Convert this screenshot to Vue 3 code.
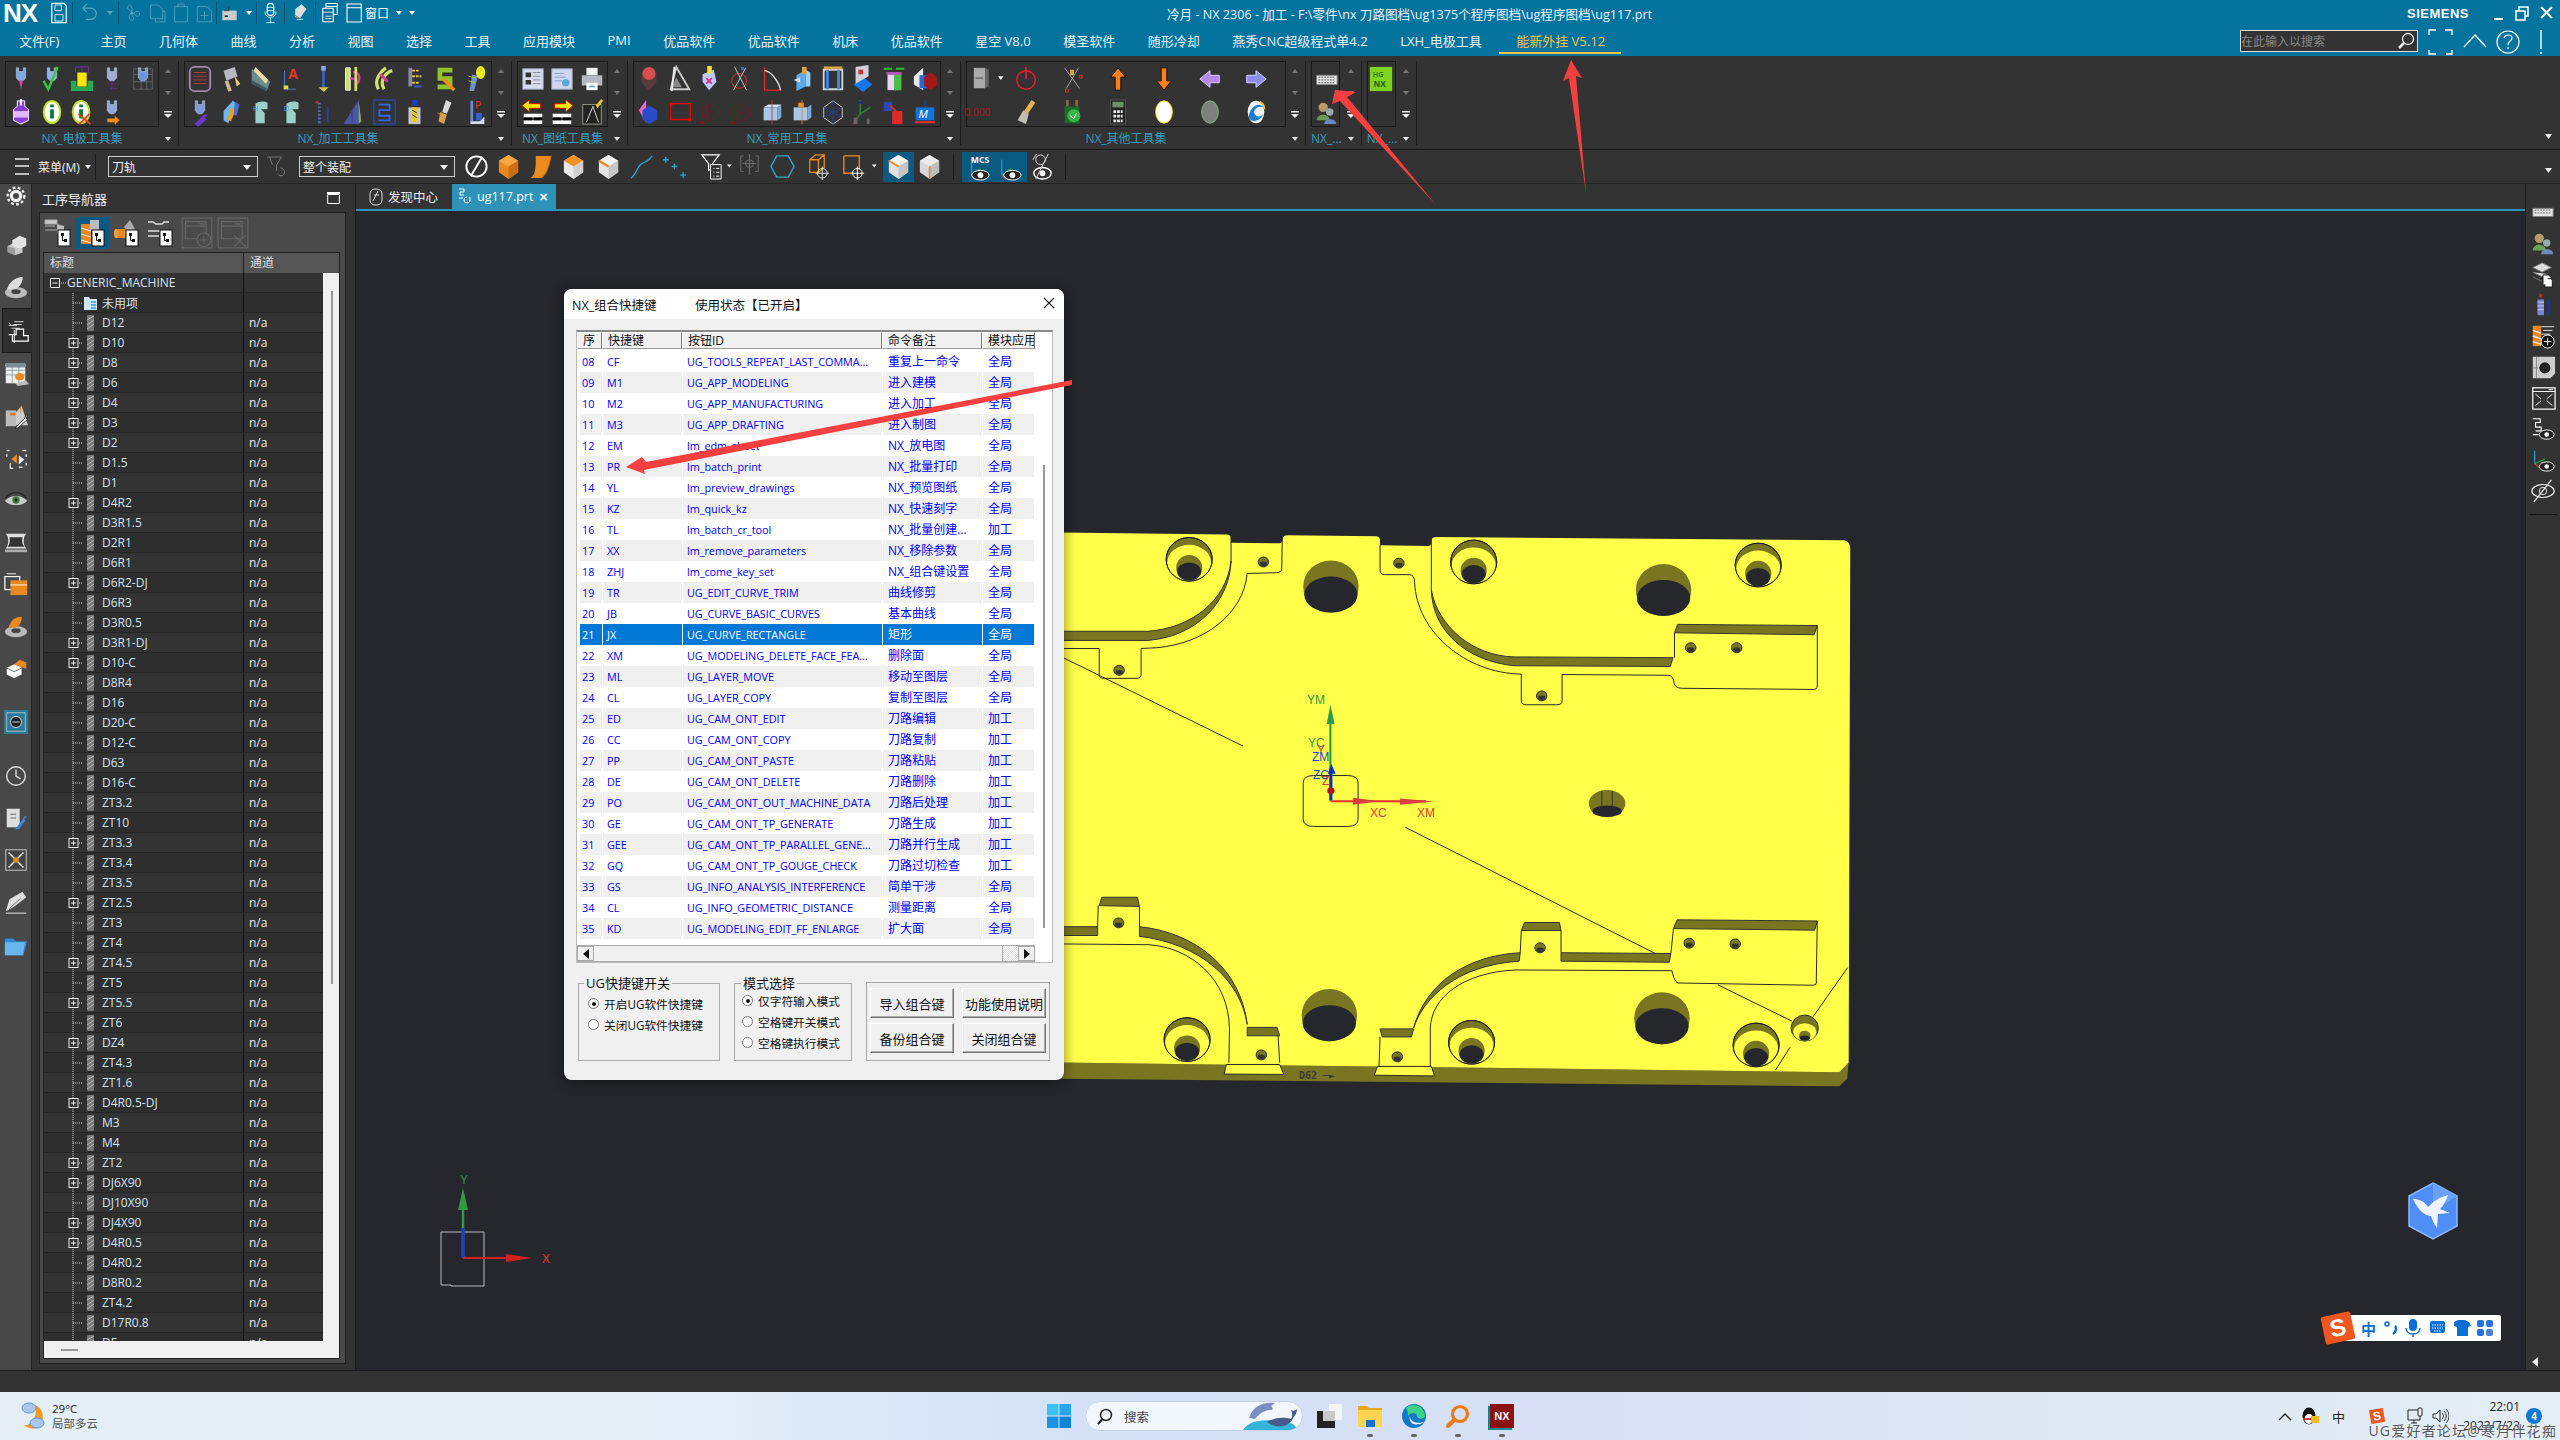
<script setup>
// ---- small svg snippets used by the toolbars (viewBox 0 0 28 30) ----
const el = (c = '#7fa8e0') => `<path d="M9 3h2.5v4h5V3H19v11l-3 3h-4l-3-3z" fill="${c}" stroke="#d6e4ff" stroke-width=".5"/>`
const tip = '<path d="M12 17h4l-2 9z" fill="#e23fa6"/>'
const tree = '<rect x="14" y="12" width="12" height="16" fill="#fff" stroke="#111"/><path d="M17 15h3v3h-3zM20 21h3v3h-3z" fill="#111"/><path d="M18.500 18v4.500H20" stroke="#111" fill="none"/>'

const groups = [
  {
    label: 'NX_电极工具集', width: 154, cols: 'repeat(5,1fr)',
    icons: [
      el() + tip,
      el('#8fb4ea') + '<path d="M5 17l5 9 10-24" fill="none" stroke="#36c93c" stroke-width="2.600"/>',
      '<path d="M2 28V17h6v6h12v-6h6v11z" fill="#2aa84f"/><rect x="9" y="8" width="10" height="15" fill="#ffe600"/><path d="M7 8V2h14v6M14 1v7" fill="none" stroke="#7a2cb0"/>',
      el('#a5a9d8') + '<path d="M10 20h10M12 25h8M14 17v10" stroke="#6a2ca0" stroke-dasharray="2 1"/>',
      '<path d="M4 4h20v22H4zM4 10h20M4 18h20M12 4v22M18 4v22" stroke="#666" fill="none"/>' + el('#6a98d8'),
      '<path d="M10 3h8v6l4 3v12l-8 4-8-4V12l4-3z" fill="#8a3fd0" stroke="#fff" stroke-width="1"/><path d="M6 14h16v7H6z" fill="#e2b8ff"/><path d="M14 1v7" stroke="#fff" stroke-width="2"/>',
      '<ellipse cx="14" cy="15" rx="9" ry="12" fill="#fff" stroke="#b9e01f" stroke-width="2"/><path d="M12 12h4v10h-4zM12 7h4v3h-4z" fill="#0a7a2a"/>',
      '<ellipse cx="13" cy="15" rx="9" ry="12" fill="#fff" stroke="#b9e01f" stroke-width="2"/><path d="M11 12h4v10h-4zM11 7h4v3h-4z" fill="#0a7a2a"/><path d="M10 17l13 11M22 17L11 28" stroke="#e0441f" stroke-width="2"/>',
      el('#93a8d8') + '<path d="M9 22h8v-3l5 5-5 5v-3H9z" fill="#f58a1f"/>'
    ]
  },
  {
    label: 'NX_加工工具集', width: 308, cols: 'repeat(10,1fr)',
    icons: [
      '<rect x="3" y="2" width="22" height="26" rx="5" fill="#333" stroke="#9a8aa8" stroke-width="2"/><path d="M7 8h14M7 12h14M7 16h14M7 20h14" stroke="#c0393b"/>',
      '<path d="M6 6l12-4 3 10-12 5z" fill="#b8b8c0"/><path d="M9 17l4 11" stroke="#c9b98a" stroke-width="4"/><path d="M18 12l6 8-4 3z" fill="#e6d36a"/>',
      '<path d="M4 4l20 14-4 10L4 20z" fill="#6b8b90"/><path d="M8 2l14 14-3 4L6 6z" fill="#e8d9a0"/><path d="M4 20l16 8v-3L4 16z" fill="#3e5a60"/>',
      '<path d="M6 6v20h12" stroke="#4a86d8" fill="none"/><text x="10" y="15" font-size="15" font-weight="700" fill="#e5352b">A</text><path d="M5 22h5v4H5z" fill="#e9d24f"/>',
      '<path d="M13 2h3v22h-3z" fill="#3a5fc8"/><path d="M9 24h11l-5 5z" fill="#d8c64a"/><path d="M12 1h5v5h-5z" fill="#8aa6f0"/>',
      '<path d="M6 3h5v24H6z" fill="#c9e060" stroke="#fff"/><path d="M14 8c8-2 9 9 3 13M11 14l8 2" fill="none" stroke="#d33ca8" stroke-width="2.500"/><path d="M17 2v26" stroke="#c9e060" stroke-width="3"/>',
      '<path d="M8 26C2 15 12 6 16 3M14 26C8 15 18 7 23 6" fill="none" stroke="#cfe36a" stroke-width="3.500"/><path d="M10 10l8 8" stroke="#d33ca8" stroke-width="3"/>',
      '<path d="M8 3h4v20H8z" fill="#8a8ab0"/><path d="M12 6h8M12 12h10M12 19h8" stroke="#e2c24a" stroke-width="2" stroke-dasharray="3 1"/><path d="M14 23h8" stroke="#3a5fc8" stroke-width="2"/>',
      '<path d="M6 3h16v5H11v4h11v14H6v-5h11v-4H6z" fill="#8fc52a"/><path d="M12 15l12 12" stroke="#f58a1f" stroke-width="3.500"/>',
      '<path d="M7 28l3-18 6 2-4 16z" fill="#6f90c8"/><ellipse cx="19" cy="8" rx="5" ry="7" fill="#e6ec1f"/><path d="M6 12l8 2M6 17l7 2" stroke="#a8d028"/>',
      el('#7f9ad8') + '<path d="M8 28l8-8c2-3 5-3 6-1l-3 2 2 2-9 8z" fill="#6a38c8"/>',
      '<path d="M6 14l10-11 4 3-9 21-5-3z" fill="#6fb5ee"/><path d="M14 10l5 3-5 12-4-2z" fill="#e6a21f"/><path d="M18 4l5 3-3 12-3-1z" fill="#4a6fd0"/>',
      '<path d="M8 6c4-3 10-3 13-1v7H14l4 4v11H8z" fill="#9ad0c8"/><text x="5" y="14" font-size="8" fill="#3da0ff">H</text>',
      '<path d="M8 6c4-3 10-3 13-1v7H14l4 4v11H8z" fill="#9ad0c8"/><text x="5" y="14" font-size="8" fill="#3da0ff">D</text>',
      '<path d="M10 5v22" stroke="#4b72c8" stroke-width="3" stroke-dasharray="2 2"/><path d="M19 10v16" stroke="#2a3fb0" stroke-width="2"/><path d="M6 3h3v3H6z" fill="#a33"/>',
      '<path d="M20 2v26H4z" fill="#4a57a8"/><path d="M20 2v26l3-3z" fill="#8ab05a"/><path d="M13 14v12" stroke="#2a3a7a"/>',
      '<rect x="3" y="2" width="23" height="26" fill="none" stroke="#2a4a9a" stroke-width="1.500"/><path d="M8 7h12v6H9v6h11v5H8" fill="none" stroke="#3467e0" stroke-width="2"/>',
      '<path d="M8 10h13v18H8z" fill="#c4c4c4"/><path d="M12 2h6v6h-6z" fill="#1c3fbf"/><path d="M12 10h5v16h-5z" fill="#e8c81f"/><path d="M12 13l5 3M12 18l5 3" stroke="#222"/>',
      '<path d="M15 2l6 3-5 12-5-2z" fill="#d8d8d8"/><path d="M9 15l7 3-3 10-6-3z" fill="#d7a14c"/><path d="M6 16l4 2" stroke="#e87a1f"/>',
      '<path d="M8 3h3v22H8z" fill="#6a86e0"/><text x="13" y="12" font-size="11" fill="#e5352b">P</text><path d="M8 25h10l5-5v8H8z" fill="#d8d8f0"/><path d="M14 16h6v8h-6z" fill="#3a5fc8"/>'
    ]
  },
  {
    label: 'NX_图纸工具集', width: 91, cols: 'repeat(3,1fr)',
    icons: [
      '<rect x="3" y="4" width="22" height="22" fill="#d8dcf0" stroke="#9aa0c0"/><path d="M6 8h6v5H6zM6 16h6v5H6z" fill="#333"/><path d="M14 8h8M14 12h8M14 16h8M14 20h8" stroke="#888"/>',
      '<rect x="3" y="4" width="22" height="22" fill="#cfd8ee" stroke="#9aa0c0"/><path d="M6 9h10M6 13h12M6 17h8" stroke="#7b9ac8"/><circle cx="18" cy="19" r="4" fill="#5ca8d8"/>',
      '<path d="M8 3h12v8H8z" fill="#f4f4f4"/><path d="M3 11h22v11H3z" fill="#b5b8c0"/><path d="M8 19h12v8H8z" fill="#fff"/><path d="M11 22h6v2h-6z" fill="#78a8d0"/>',
      '<path d="M2 8l8-6v4h12v5H10v4z" fill="#ffea00" stroke="#d60000"/><path d="M4 17h20v4H4zM4 24h20v4H4z" fill="#fff"/><path d="M4 21h9v3H4zM15 21h9v3h-9z" fill="#000"/>',
      '<path d="M26 8l-8-6v4H6v5h12v4z" fill="#ffea00" stroke="#d60000"/><path d="M4 17h20v4H4zM4 24h20v4H4z" fill="#fff"/><path d="M4 21h9v3H4zM15 21h9v3h-9z" fill="#000"/>',
      '<rect x="4" y="7" width="20" height="21" fill="#222" stroke="#998"/><path d="M8 26L15 9l6 17" fill="none" stroke="#ddd"/><path d="M18 8l6-7 2 2-6 8z" fill="#e8c81f"/>'
    ]
  },
  {
    label: 'NX_常用工具集', width: 308, cols: 'repeat(10,1fr)',
    icons: [
      '<path d="M6 8h16v10l-8 10-8-10z" fill="#5a3a3a"/><circle cx="14" cy="9" r="7" fill="#d8504e"/>',
      '<path d="M10 2l14 24H4z" fill="none" stroke="#ccc" stroke-width="2"/><path d="M10 13l6 11H5z" fill="#888"/><path d="M8 2l-3 26" stroke="#eee" stroke-width="2"/>',
      '<path d="M6 10l12-5 3 13-8 9-7-9z" fill="#bfc8f0"/><path d="M11 1h5v8h-5z" fill="#f3e11f"/><path d="M10 14l6 6M16 14l-6 6" stroke="#d0318a" stroke-width="2"/>',
      '<circle cx="12" cy="17" r="8" fill="none" stroke="#d33"/><path d="M7 2l13 25M19 3L6 27" stroke="#ccc"/><path d="M14 2h3v3h-3z" fill="#4a67e0"/>',
      '<path d="M6 3v24h18" fill="none" stroke="#e5252b" stroke-width="1.500"/><path d="M6 6c6 0 16 12 17 21" fill="none" stroke="#ddd" stroke-width="1.500"/>',
      '<path d="M8 11l10-6v18l-10 5z" fill="#5ca8e8"/><path d="M18 5l5 3v15l-5 0z" fill="#9ad0f8"/><path d="M14 2h5v8h-5z" fill="#e0a040"/><path d="M5 16l7-3v6z" fill="#ddd"/>',
      '<path d="M4 5h20v21H4z" fill="none" stroke="#d5d5d5" stroke-width="2"/><path d="M8 5v21M20 5v21" stroke="#3a8ae8" stroke-width="3"/><path d="M4 3h20" stroke="#d9a548" stroke-width="3"/>',
      '<path d="M14 12l10 9-10 8-10-8z" fill="#1475e6"/><path d="M6 2l14-2v12L6 20z" fill="#d0d0d8"/><path d="M9 5h5v5H9z" fill="#c33"/>',
      '<path d="M7 9h14v18H7z" fill="#ead4f4"/><path d="M14 9h8v18h-8z" fill="#48bf48"/><path d="M3 4h9M16 4h9" stroke="#2cbf2c" stroke-width="2"/><path d="M6 9h16" stroke="#c04fc0" stroke-width="3"/>',
      '<path d="M12 3v24l-10-6V12z" fill="#e8e8e8"/><path d="M8 11h16l-4 14H8z" fill="#2a6ad0"/><path d="M20 8l7 5v9l-7 5-7-5v-9z" fill="#a01818"/>',
      '<path d="M11 2l-8 11 8 14V2z" fill="#e86ac8"/><path d="M14 8l9 5v10l-9 5-7-5V13z" fill="#2a4ac8"/>',
      '<path d="M4 6h21v17H4z" fill="none" stroke="#e00" stroke-width="1.500"/><path d="M3 5h3v3H3zM23 22h3v3h-3z" fill="#e00"/>',
      '<path d="M14 6l8 4v10l-8 5-8-5V10z" fill="none" stroke="#6d2020"/><path d="M10 8v14M16 10l-4 10" stroke="#6d2020"/><path d="M4 24l6 4H2z" fill="#7a1a1a"/>',
      '<path d="M14 6l8 4v10l-8 5-8-5V10z" fill="none" stroke="#6d2020"/><path d="M10 8v14M16 10l-4 10" stroke="#6d2020"/><path d="M4 24l6 4H2z" fill="#7a1a1a"/>',
      '<path d="M5 10h15v14H5z" fill="#a8c8ea"/><path d="M20 10l4-3v14l-4 3z" fill="#7aa8d8"/><path d="M5 10l5-3h14l-4 3z" fill="#d0e4f8"/><path d="M14 2v26" stroke="#c04040"/>',
      '<path d="M5 10h15v14H5z" fill="#a8c8ea"/><path d="M20 10l4-3v14l-4 3z" fill="#7aa8d8"/><path d="M10 5h6v5h-6z" fill="#e89030"/><path d="M14 2v26" stroke="#e08020"/>',
      '<path d="M14 3l10 7v11l-10 7-10-7V10z" fill="none" stroke="#ccc"/><path d="M14 3v25M4 10l20 11M24 10L4 21" stroke="#2a40a0"/>',
      '<path d="M11 17V2M11 17l11-7M11 17l-6 9" stroke="#2a8a30" stroke-width="1.500"/><path d="M11 2l-2 4h4z" fill="#1a2ab0"/><path d="M4 21h4v7H4zM18 22h3v6h-3z" fill="#666"/><path d="M5 26l-2 2" stroke="#e04040"/>',
      '<path d="M3 4h9v10H3z" fill="#2a4ab0"/><path d="M12 14h11v14H12z" fill="#e02a2a"/><path d="M10 8l8 8" stroke="#e02a2a" stroke-width="2"/>',
      '<path d="M14 2v8" stroke="#1a4ab0"/><path d="M4 10h20v14H4z" fill="#1475d8"/><text x="7" y="22" font-size="12" font-style="italic" fill="#fff">M</text><path d="M3 26h22" stroke="#f03030" stroke-width="2"/>'
    ]
  },
  {
    label: 'NX_其他工具集', width: 320, cols: '36px repeat(6,46px)',
    icons: [
      '<g transform="translate(-4)"><path d="M6 3h12v22H6z" fill="#aaa"/><path d="M18 3l4 2v18l-4 2z" fill="#666"/><path d="M8 14h8" stroke="#444"/><path d="M32 12h6l-3 4z" fill="#fff"/></g>',
      '<circle cx="14" cy="16" r="10" fill="none" stroke="#e01f2f" stroke-width="1.600"/><path d="M14 2v13" stroke="#e01f2f" stroke-width="2"/>',
      '<path d="M6 3l16 22M21 3L8 25" stroke="#aaa"/><path d="M22 11h3v3h-3zM7 26h3v3H7z" fill="none" stroke="#d33"/><path d="M12 5h4v6h-4z" fill="#c9b04a"/>',
      '<path d="M14 3l8 10h-5v14h-6V13H6z" fill="#ff7f1f" stroke="#111"/>',
      '<path d="M14 27L6 17h5V3h6v14h5z" fill="#ff7f1f" stroke="#111"/>',
      '<path d="M3 15l11-9v5h10v8H14v5z" fill="#b388e8" stroke="#e2d0ff"/>',
      '<path d="M25 15l-11-9v5H4v8h10v5z" fill="#8c8cee" stroke="#dcdcff"/>',
      '<text x="-8" y="19" font-size="11" fill="#a81818" font-family="Liberation Sans,sans-serif">0.000</text>',
      '<path d="M20 2l4 3-8 12-4-3z" fill="#e8b44a"/><path d="M11 13l6 4-3 11-9-4z" fill="#c0c0b8"/>',
      '<path d="M9 2v7M19 2v7" stroke="#7a6a3a" stroke-width="3"/><path d="M6 9h16v18H6z" fill="#1f6a2a"/><circle cx="16" cy="19" r="7" fill="#39b54a"/><path d="M12 19l4 3 3-6" stroke="#fff" fill="none"/>',
      '<rect x="6" y="2" width="16" height="26" fill="#222" stroke="#555"/><rect x="8" y="4" width="12" height="6" fill="#6f8f6f"/><path d="M9 13h3v3H9zM13 13h3v3h-3zM17 13h2v3h-2zM9 18h3v3H9zM13 18h3v3h-3zM17 18h2v3h-2zM9 23h3v3H9zM13 23h3v3h-3zM17 23h2v3h-2z" fill="#e8e8e8"/>',
      '<ellipse cx="14" cy="15" rx="9" ry="12" fill="#fff" stroke="#ee0"/>',
      '<ellipse cx="14" cy="15" rx="9" ry="12" fill="#808080" stroke="#8a8"/>',
      '<ellipse cx="14" cy="15" rx="9" ry="12" fill="#f4f4f4"/><path d="M6 20C8 8 18 4 22 10c-6-2-10 2-10 6 3 6 8 4 10 1-3 9-14 10-16 3z" fill="#1b7fd6"/><path d="M18 4c3 1 5 4 5 8" stroke="#f3c21f" stroke-width="2" fill="none"/>'
    ]
  },
  {
    label: 'NX_...', width: 29, cols: '1fr',
    icons: [
      '<path d="M4 11h22v10H4z" fill="#e4e4e4" stroke="#888"/><path d="M6 13h18M6 16h18M6 19h18" stroke="#555" stroke-dasharray="2 1"/><path d="M15 4v4" stroke="#333"/>',
      '<circle cx="11" cy="10" r="5" fill="#b69a6a"/><path d="M4 24c0-8 14-8 14 0z" fill="#6a9a5a"/><circle cx="18" cy="15" r="4" fill="#9aa"/><path d="M12 28c0-7 13-7 13 0z" fill="#6a8ac0"/>'
    ]
  },
  {
    label: 'NX_...', width: 29, cols: '1fr',
    icons: [
      '<rect x="2" y="2" width="24" height="26" fill="#7ed321"/><text x="5" y="13" font-size="8" font-weight="700" fill="#3c7a12">HG</text><text x="6" y="24" font-size="9" font-weight="700" fill="#2b5a10">NX</text>',
      ''
    ]
  }
]

const quick = [
  { w: 26, s: '<path d="M5 3h15l3 3v21H5z" fill="none" stroke="#fff" stroke-width="1.500"/><path d="M9 5h8v7H9zM9 17h10v8H9z" fill="none" stroke="#fff"/>' },
  { sep: true },
  { w: 29, dim: true, s: '<path d="M8 9h10a6 6 0 0 1 0 14h-6M8 9l5-5M8 9l5 5" fill="none" stroke="#fff" stroke-width="1.500"/>' },
  { w: 16, arrow: true, dim: true },
  { sep: true },
  { w: 26, dim: true, s: '<circle cx="14" cy="15" r="2" fill="#fff"/><path d="M14 13c-6-1-7-7-3-8 2 0 4 4 3 8zM16 15c5-4 9-1 7 3-1 2-5 1-7-3zM12 16c-3 4-1 9 3 8 2-1 1-5-3-8z" fill="none" stroke="#fff"/>' },
  { w: 24, dim: true, s: '<path d="M6 5h10l5 5v12H6zM12 22v4h12V13h-3" fill="none" stroke="#fff"/>' },
  { w: 24, dim: true, s: '<path d="M6 7h16v19H6zM10 7V4h8v3" fill="none" stroke="#fff"/>' },
  { w: 23, dim: true, s: '<path d="M5 7h12l6 6v13H5zM14 13v10M9 18h10" fill="none" stroke="#fff"/>' },
  { sep: true },
  { w: 25, s: '<path d="M5 12h18v12H5z" fill="#ccc"/><path d="M7 12h6V7" fill="none" stroke="#333"/><path d="M8 19h4" stroke="#222" stroke-width="2"/>' },
  { w: 14, arrow: true },
  { sep: true },
  { w: 27, s: '<rect x="10" y="3" width="8" height="15" rx="4" fill="none" stroke="#fff" stroke-width="1.500"/><path d="M7 13c0 10 14 10 14 0M14 21v6M9 27h10M10 8h8M10 12h8" fill="none" stroke="#fff"/>' },
  { sep: true },
  { w: 30, s: '<path d="M8 10l8-6 6 6-8 12-6-2z" fill="#ddd"/><path d="M8 18l6 4" stroke="#555"/><path d="M10 23h8" stroke="#fff"/>' },
  { sep: true },
  { w: 28, s: '<path d="M9 3h14v14H9zM9 7h14" fill="none" stroke="#fff" stroke-width="1.300"/><path d="M5 9h13v17H5z" fill="#0a6d94" stroke="#fff" stroke-width="1.300"/><path d="M5 14h13M8 19h8M8 22h8" stroke="#fff"/>' },
  { w: 21, s: '<path d="M4 3h19v24H4zM4 8h19" fill="none" stroke="#fff" stroke-width="1.400"/>' }
]

const menuTabs = ['主页', '几何体', '曲线', '分析', '视图', '选择', '工具', '应用模块', 'PMI', '优品软件', '优品软件', '机床', '优品软件', '星空 V8.0', '模圣软件', '随形冷却', '燕秀CNC超级程式单4.2', 'LXH_电极工具']

const box = (c1, c2, c3) => `<path d="M14 3l10 6v12l-10 7-10-7V9z" fill="${c1}"/><path d="M4 9l10 6 10-6-10-6z" fill="${c2}"/><path d="M14 15v13l10-7V9z" fill="${c3}"/>`
const tool2 = [
  { w: 32, s: '<circle cx="14" cy="15" r="10.500" fill="none" stroke="#fff" stroke-width="2"/><path d="M20 5L8 25" stroke="#fff" stroke-width="2"/>' },
  { w: 33, s: box('#e88a1f', '#f5a742', '#c96f12') },
  { w: 32, s: '<path d="M8 4h16c-2 8-3 17-10 23H3C9 22 8 11 8 4z" fill="#ea8a1f"/><path d="M24 4c-2 8-3 17-10 23" stroke="#c86b12" fill="none"/>' },
  { w: 35, s: box('#e8e8e8', '#ef9222', '#cfcfcf') },
  { w: 33, s: box('#e4e4e4', '#f2f2f2', '#c6c6c6') + '<path d="M4 9l10 6" stroke="#e88a1f" stroke-width="2.500"/>' },
  { w: 32, s: '<path d="M3 27c5-3 6-10 10-14s8-2 12-9" fill="none" stroke="#2ea3d0" stroke-width="1.400"/>' },
  { w: 38, s: '<path d="M3 8h6M6 5v6M12 15h6M15 12v6M21 24h6M24 21v6" stroke="#2ea3d0" stroke-width="1.400"/>' },
  { w: 38, s: '<path d="M4 3h18l-7 9v5l-4 2v-7z" fill="none" stroke="#fff" stroke-width="1.300"/><path d="M13 13h11v15H13z" fill="#333" stroke="#fff"/><path d="M16 17h1M19 17h3M16 21h1M19 21h3M16 25h1M19 25h3" stroke="#fff"/><path d="M30 13h5l-2.500 3z" fill="#fff"/>' },
  { w: 33, dim: true, s: '<path d="M5 4h3M5 4v16h3M20 4h3v16h-3M14 2v22M7 12h14" fill="none" stroke="#999"/><circle cx="14" cy="12" r="4" fill="none" stroke="#999"/>' },
  { w: 34, s: '<path d="M8 4h12l6 11-6 11H8L2 15z" fill="none" stroke="#2ea3d0" stroke-width="1.500"/>' },
  { w: 37, s: '<path d="M7 8l6-5h9v13l-6 5H7zM7 8h9v13M16 8l6-5" fill="none" stroke="#e88a1f" stroke-width="1.300"/><circle cx="20" cy="22" r="5" fill="none" stroke="#ddd"/><path d="M20 15v14M13 22h14" stroke="#ddd"/>' },
  { w: 45, s: '<path d="M4 4h16v14" fill="none" stroke="#e88a1f" stroke-width="1.400"/><path d="M4 4v18h8" fill="none" stroke="#e88a1f" stroke-width="1.400"/><circle cx="18" cy="22" r="5" fill="none" stroke="#fff"/><path d="M18 15v14M11 22h14" stroke="#fff"/><path d="M33 13h5l-2.500 3z" fill="#fff"/>' },
  { w: 31, on: true, s: box('#e0e0e0', '#f4f4f4', '#c4c4c4') + '<path d="M4 9l10 6" stroke="#e88a1f" stroke-width="2"/>' },
  { w: 34, s: box('#d8d8d8', '#ececec', '#bdbdbd') + '<path d="M14 15v13" stroke="#e88a1f" stroke-width="1.600"/>' },
  { sep: true },
  { w: 32, on: true, s: '<text x="7" y="11" font-size="9" fill="#fff" font-weight="700">MCS</text><path d="M8 24V11" stroke="#2aa0d8" stroke-width="1.200"/><path d="M8 24l9-7" stroke="#2fa33a" stroke-width="1.200"/><path d="M8 24l4 5" stroke="#e04040" stroke-width="1.200"/><ellipse cx="17" cy="24" rx="9" ry="5" fill="#222" stroke="#fff"/><circle cx="17" cy="24" r="3" fill="#fff"/>' },
  { w: 33, on: true, s: '<path d="M6 24V8" stroke="#2aa0d8" stroke-width="1.200"/><path d="M6 24l10-7" stroke="#2fa33a" stroke-width="1.200"/><path d="M6 24l4 5" stroke="#e04040" stroke-width="1.200"/><ellipse cx="17" cy="24" rx="9" ry="5" fill="#222" stroke="#fff"/><circle cx="17" cy="24" r="3" fill="#fff"/>' },
  { w: 33, s: '<ellipse cx="14" cy="22" rx="9" ry="6" fill="none" stroke="#fff" stroke-width="1.400"/><circle cx="14" cy="22" r="3" fill="#fff"/><circle cx="12" cy="8" r="5" fill="none" stroke="#ddd"/><path d="M20 2L7 28M8 2l-4 6" stroke="#ddd"/>' },
  { sep: true }
]

const leftTabs = [
  { h: 24, s: '<circle cx="14" cy="14" r="5" fill="none" stroke="#eee" stroke-width="3.500"/><circle cx="14" cy="14" r="9" fill="none" stroke="#eee" stroke-width="2.500" stroke-dasharray="3 2.500"/>' },
  { gap: 16, s: '<path d="M5 15l8-4 8 3v8l-8 3-8-4z" fill="#c9c9c9"/><path d="M10 9l8-5 7 3v8l-7 3-8-3z" fill="#e2e2e2"/><path d="M5 15v7l8 3v-7z" fill="#9a9a9a"/>' },
  { s: '<ellipse cx="14" cy="20" rx="12" ry="6" fill="#bcbcbc"/><ellipse cx="14" cy="19" rx="5" ry="2.500" fill="#444"/><path d="M4 17C7 8 13 4 21 3c1 5-3 11-7 13z" fill="#ddd"/>' },
  { h: 45, on: true, s: '<path d="M4 8h9M7 11h9M4 5l3 3M9 7h9M10 4h10" stroke="#ddd"/><path d="M8 18h4v-6h8v7h5v6H8zM4 18h4" fill="none" stroke="#fff" stroke-width="1.300"/><path d="M10 13v14" stroke="#fff"/>' },
  { s: '<rect x="3" y="3" width="21" height="21" fill="#eee"/><path d="M3 3h21v3H3zM3 10h21M3 15h21M10 6v18M17 6v18" stroke="#8aa" fill="none"/><path d="M3 3h21v4H3z" fill="#7a8a9a"/><ellipse cx="18" cy="17" rx="5" ry="4" fill="#e88a1f"/><path d="M13 24l12-3 3 4-12 2z" fill="#bbb"/>' },
  { s: '<path d="M3 8h11v17H3z" fill="#bbb"/><path d="M14 10l6-7 7 21h-13z" fill="#ccc"/><path d="M8 11h5v2H8zM19 4v7" stroke="#e87a1f" fill="#e87a1f"/><path d="M27 13l-2 3 1 2-10 9h-3l10-10 2-4z" fill="#fff" stroke="#222"/>' },
  { s: '<path d="M4 6h3M4 10v3M8 19v6h3M25 6h-4M25 10v3M25 19v3M17 24h4" stroke="#ddd" stroke-width="1.600"/><path d="M15 10l-6 5 6 5z" fill="#e88a1f"/><path d="M17 11l6 5-6 5z" fill="#eaeaea"/>' },
  { s: '<path d="M2 15c6-7 18-7 24 0-6 6-18 6-24 0z" fill="#ccc"/><circle cx="14" cy="14" r="4" fill="#3a7f3a"/><circle cx="14" cy="14" r="1.500" fill="#111"/><path d="M3 12c6-8 16-8 22 0" fill="none" stroke="#222" stroke-width="1.500"/>' },
  { s: '<path d="M3 5h22l-2 3c-2 8 1 11 2 13H3c1-2 4-5 2-13z" fill="#ddd"/><path d="M7 9c1 5 0 8-2 10h18c-2-2-3-5-2-10z" fill="#333"/><path d="M2 22h24v3H2z" fill="#aaa"/>' },
  { s: '<rect x="2" y="6" width="16" height="14" fill="none" stroke="#fff" stroke-width="1.300"/><rect x="8" y="10" width="18" height="16" fill="#e88a1f"/><path d="M8 15h18" stroke="#fff"/><path d="M4 3h10" stroke="#fff"/>' },
  { s: '<ellipse cx="14" cy="20" rx="12" ry="6" fill="#bbb"/><ellipse cx="14" cy="19" rx="5" ry="2.500" fill="#444"/><path d="M6 16C8 8 13 4 20 4c1 5-3 11-7 12z" fill="#e88a1f"/>' },
  { s: '<path d="M4 14l8-4 8 3v8l-8 4-8-4z" fill="#fff"/><path d="M12 10l6-5 7 3v7l-5-2z" fill="#e88a1f"/><path d="M4 14l8 4 8-4" stroke="#666" fill="none"/>' },
  { gap: 12, s: '<rect x="1" y="1" width="26" height="26" fill="#2a7c9a"/><path d="M4 4h20v20H4z" fill="none" stroke="#bbb"/><circle cx="14" cy="14" r="6" fill="#222" stroke="#ddd"/><path d="M10 14h8" stroke="#ddd"/>' },
  { gap: 12, s: '<circle cx="14" cy="14" r="10" fill="none" stroke="#ddd" stroke-width="1.500"/><path d="M14 7v7l5 3" fill="none" stroke="#ddd" stroke-width="1.500"/>' },
  { s: '<path d="M4 4h14v20H4z" fill="#ddd"/><path d="M8 10h6M8 14h6" stroke="#666"/><path d="M26 12l-3 3 1 2-7 9h-4l7-9 3-5z" fill="#3a86d8"/>' },
  { s: '<rect x="3" y="3" width="22" height="22" fill="#444" stroke="#ccc"/><path d="M6 6l16 16M22 6L6 22" stroke="#fff" stroke-width="1.500"/><circle cx="14" cy="14" r="3" fill="#e88a1f"/>' },
  { s: '<path d="M3 24l4-13 14-8 4 6-13 10z" fill="#ddd"/><path d="M7 21l12-11" stroke="#666"/><path d="M3 26h22" stroke="#eee"/>' },
  { s: '<path d="M2 8h9l3 3h12l-4 15H2z" fill="#2e8cd8"/><path d="M2 12h22l-3 14H2z" fill="#6ab7ee"/>' }
]

const rightTools = [
  '<path d="M3 10h22v9H3z" fill="#e4e4e4" stroke="#777"/><path d="M5 12h18M5 15h18" stroke="#666" stroke-dasharray="2 1"/>',
  '<circle cx="10" cy="9" r="5" fill="#b69a6a"/><path d="M3 22c0-8 14-8 14 0z" fill="#6aa05a"/><circle cx="18" cy="14" r="4" fill="#9aa"/><path d="M12 26c0-7 13-7 13 0z" fill="#6a8ac0"/>',
  '<path d="M3 7l10-5 10 5-10 5zM3 12l10 5 6-3M3 17l10 5" fill="#ddd" stroke="#777"/><path d="M14 15h6l3 3v8h-9z" fill="#fff" stroke="#111"/><path d="M19 19h4l1 2v7h-8v-3" fill="#fff" stroke="#111"/>',
  '<path d="M8 8h7v17H8z" fill="#7a86d8"/><path d="M8 11h7M8 15h7M8 19h7" stroke="#ccd"/><path d="M10 2h3v4h-3z" fill="#b33"/><path d="M20 8v17" stroke="#1a30b0" stroke-width="2"/>',
  '<path d="M3 3h9v22H3z" fill="#e88a1f"/><path d="M3 8l9 3M3 14l9 3M3 20l9 3" stroke="#eee" stroke-width="1.500"/><path d="M12 4h14M14 8h10M12 12h10" stroke="#eee"/><circle cx="19" cy="20" r="7" fill="#111" stroke="#fff"/><path d="M19 16v8M15 20h8" stroke="#fff"/>',
  '<path d="M3 3h24v18l-5 5H3z" fill="#ccc"/><circle cx="16" cy="15" r="6" fill="#222"/><path d="M7 3v23" stroke="#888"/><path d="M3 15h6" stroke="#888"/>',
  '<rect x="3" y="3" width="24" height="23" fill="none" stroke="#fff" stroke-width="1.300"/><path d="M3 7h24M20 5h5M6 10l6 5M6 22l6-5M24 10l-6 5M24 22l-6-5" stroke="#fff"/>',
  '<path d="M3 3h8v4H6v5h6v4H6M3 20h6" fill="none" stroke="#fff" stroke-width="1.200"/><ellipse cx="18" cy="20" rx="8" ry="5" fill="#222" stroke="#fff"/><circle cx="18" cy="20" r="2.500" fill="#fff"/>',
  '<path d="M5 18V4" stroke="#2aa0d8" stroke-width="1.300"/><path d="M5 18l11-5" stroke="#2fa33a" stroke-width="1.300"/><path d="M5 18l6 5" stroke="#e04040" stroke-width="1.300"/><ellipse cx="18" cy="21" rx="8" ry="5" fill="#222" stroke="#fff"/><circle cx="18" cy="21" r="2.500" fill="#fff"/>',
  '<ellipse cx="14" cy="14" rx="12" ry="7" fill="none" stroke="#eee" stroke-width="1.300"/><circle cx="14" cy="14" r="4" fill="none" stroke="#eee"/><path d="M23 2L4 26" stroke="#eee" stroke-width="1.300"/>'
]

const navTools = [
  { s: '<path d="M1 2h12v4H1zM1 8h10M1 12h12" stroke="#aaa" fill="#ccc"/><path d="M13 6l7 2v8h-7z" fill="#bbb"/>' + tree },
  { on: true, s: '<path d="M3 6h10v20H3z" fill="#e88a1f"/><path d="M3 10l10 3M3 16l10 3M3 22l10 3" stroke="#eee"/><path d="M12 2h9v10h-9z" fill="#bbb"/>' + tree },
  { s: '<path d="M4 11h10v9H4z" fill="#e88a1f"/><ellipse cx="4" cy="15.500" rx="2" ry="4.500" fill="#f0a040"/><path d="M12 9l6-7 5 9-5 5z" fill="#aaa"/>' + tree },
  { s: '<path d="M2 4h5l3 2h6l2-2h5M2 13h22M2 18h11" stroke="#ddd" stroke-width="1.500" fill="none"/>' + tree }
]

const navDisabled = [
  '<rect x="1" y="1" width="26" height="26" fill="none" stroke="#666"/><path d="M4 4h18v15H4zM4 8h18M16 6h5" fill="none" stroke="#666"/><circle cx="20" cy="20" r="6" fill="#4a4a4a" stroke="#666"/><path d="M20 17v6M17 20h6" stroke="#666"/>',
  '<rect x="1" y="1" width="26" height="26" fill="none" stroke="#666"/><path d="M4 4h18v15H4zM4 8h18M16 6h5M15 16l10 10M25 16L15 26" fill="none" stroke="#666"/>'
]

const navNames = ['D12', 'D10', 'D8', 'D6', 'D4', 'D3', 'D2', 'D1.5', 'D1', 'D4R2', 'D3R1.5', 'D2R1', 'D6R1', 'D6R2-DJ', 'D6R3', 'D3R0.5', 'D3R1-DJ', 'D10-C', 'D8R4', 'D16', 'D20-C', 'D12-C', 'D63', 'D16-C', 'ZT3.2', 'ZT10', 'ZT3.3', 'ZT3.4', 'ZT3.5', 'ZT2.5', 'ZT3', 'ZT4', 'ZT4.5', 'ZT5', 'ZT5.5', 'ZT6', 'DZ4', 'ZT4.3', 'ZT1.6', 'D4R0.5-DJ', 'M3', 'M4', 'ZT2', 'DJ6X90', 'DJ10X90', 'DJ4X90', 'D4R0.5', 'D4R0.2', 'D8R0.2', 'ZT4.2', 'D17R0.8', 'D5']
const navPlus = new Set(['D10', 'D8', 'D6', 'D4', 'D3', 'D2', 'D4R2', 'D6R2-DJ', 'D3R1-DJ', 'D10-C', 'ZT3.3', 'ZT2.5', 'ZT4.5', 'ZT5.5', 'DZ4', 'D4R0.5-DJ', 'ZT2', 'DJ6X90', 'DJ4X90', 'D4R0.5'])

const comboRows = [
  ['08', 'CF', 'UG_TOOLS_REPEAT_LAST_COMMA…', '重复上一命令', '全局'],
  ['09', 'M1', 'UG_APP_MODELING', '进入建模', '全局'],
  ['10', 'M2', 'UG_APP_MANUFACTURING', '进入加工', '全局'],
  ['11', 'M3', 'UG_APP_DRAFTING', '进入制图', '全局'],
  ['12', 'EM', 'lm_edm_sheet', 'NX_放电图', '全局'],
  ['13', 'PR', 'lm_batch_print', 'NX_批量打印', '全局'],
  ['14', 'YL', 'lm_preview_drawings', 'NX_预览图纸', '全局'],
  ['15', 'KZ', 'lm_quick_kz', 'NX_快速刻字', '全局'],
  ['16', 'TL', 'lm_batch_cr_tool', 'NX_批量创建…', '加工'],
  ['17', 'XX', 'lm_remove_parameters', 'NX_移除参数', '全局'],
  ['18', 'ZHJ', 'lm_come_key_set', 'NX_组合键设置', '全局'],
  ['19', 'TR', 'UG_EDIT_CURVE_TRIM', '曲线修剪', '全局'],
  ['20', 'JB', 'UG_CURVE_BASIC_CURVES', '基本曲线', '全局'],
  ['21', 'JX', 'UG_CURVE_RECTANGLE', '矩形', '全局'],
  ['22', 'XM', 'UG_MODELING_DELETE_FACE_FEA…', '删除面', '全局'],
  ['23', 'ML', 'UG_LAYER_MOVE', '移动至图层', '全局'],
  ['24', 'CL', 'UG_LAYER_COPY', '复制至图层', '全局'],
  ['25', 'ED', 'UG_CAM_ONT_EDIT', '刀路编辑', '加工'],
  ['26', 'CC', 'UG_CAM_ONT_COPY', '刀路复制', '加工'],
  ['27', 'PP', 'UG_CAM_ONT_PASTE', '刀路粘贴', '加工'],
  ['28', 'DE', 'UG_CAM_ONT_DELETE', '刀路删除', '加工'],
  ['29', 'PO', 'UG_CAM_ONT_OUT_MACHINE_DATA', '刀路后处理', '加工'],
  ['30', 'GE', 'UG_CAM_ONT_TP_GENERATE', '刀路生成', '加工'],
  ['31', 'GEE', 'UG_CAM_ONT_TP_PARALLEL_GENE…', '刀路并行生成', '加工'],
  ['32', 'GQ', 'UG_CAM_ONT_TP_GOUGE_CHECK', '刀路过切检查', '加工'],
  ['33', 'GS', 'UG_INFO_ANALYSIS_INTERFERENCE', '简单干涉', '全局'],
  ['34', 'CL', 'UG_INFO_GEOMETRIC_DISTANCE', '测量距离', '全局'],
  ['35', 'KD', 'UG_MODELING_EDIT_FF_ENLARGE', '扩大面', '全局']
]

// model geometry, in the stretched coordinates the drawing was traced from
const walls = [
  'M0,343 L168,343 C250,335 318,265 327,160 C325,255 270,355 168,367 L0,367Z',
  'M710,235 C722,330 790,408 868,410 L1172,412 L1167,435 L868,433 C775,420 712,340 710,235Z',
  'M1175,347 L1181,325 L1448,328 L1442,352 Z',
  'M75,1060 L80,1038 L148,1038 L152,1062 Z',
  'M0,1115 L72,1115 L72,1138 L0,1138Z',
  'M152,1115 C260,1130 345,1225 358,1370 C345,1255 270,1160 152,1140Z',
  'M358,1378 L415,1378 L420,1400 L358,1400Z',
  'M882,1125 L888,1104 L955,1104 L958,1125Z',
  'M958,1183 L1168,1185 L1165,1208 L958,1205Z',
  'M880,1183 C780,1190 700,1260 676,1380 C695,1300 760,1215 878,1205Z',
  'M612,1382 L676,1382 L672,1403 L616,1403Z',
  'M1173,1120 L1180,1097 L1448,1100 L1443,1124Z'
]
const lines = [
  'M327,90 L327,165',
  'M0,388 L75,388 L75,458 Q75,466 85,466 L145,466 Q155,466 155,458 L155,388 L185,386 C275,375 350,300 358,192 L414,190 Q424,190 424,178 L425,100',
  'M710,100 L710,235',
  'M1175,347 L1175,412', 'M1448,328 L1448,488',
  'M612,118 L612,185 Q612,195 622,195 L668,195 Q678,195 678,215 C682,345 775,452 882,455 L882,525 Q882,535 892,535 L950,535 Q960,535 960,525 L960,456 L1162,458 Q1173,458 1174,478 Q1176,492 1190,492 L1440,495 Q1448,495 1448,487',
  'M73,1060 L72,1115', 'M152,1062 L152,1115',
  'M0,1160 L170,1162 C250,1170 322,1250 324,1380 L323,1470',
  'M417,1400 L420,1470',
  'M882,1125 L880,1183', 'M958,1125 L958,1183',
  'M1173,1120 L1168,1185', 'M1448,1100 L1446,1260',
  'M1170,1230 L870,1228 C770,1235 710,1300 708,1380 L708,1480',
  'M1170,1230 Q1172,1250 1180,1262 L1440,1268 Q1447,1268 1447,1258',
  'M612,1403 L610,1480',
  'M0,408 L350,643', 'M660,855 L1138,1185', 'M1258,1267 L1400,1362', 'M1506,1222 L1440,1350', 'M1396,1430 L1368,1490',
  'M465,740 Q465,720 485,720 L550,720 Q570,720 570,740 L570,833 Q570,853 550,853 L485,853 Q465,853 465,833 Z'
]
const bigHoles = [[518, 226], [1154, 235], [515, 1346], [1151, 1354]]
const bores = [[247, 155], [791, 162], [1335, 170], [243, 1410], [787, 1417], [1331, 1424]]
const tinyHoles = [[389, 162], [648, 165], [113, 445], [921, 512], [1206, 386], [1294, 386], [112, 1105], [918, 1170], [1203, 1158], [1291, 1160], [385, 1450], [645, 1455]]
</script>

<template>
  <div class="app">
    <!-- blue title and tab bars -->
    <header class="head">
      <div class="title-row">
        <div class="nx">NX</div>
        <template v-for="(q, i) in quick" :key="i">
          <i v-if="q.sep" class="qsep"></i>
          <span v-else-if="q.arrow" class="qarrow" :class="{ dim: q.dim }" :style="{ width: q.w + 'px' }"></span>
          <svg v-else class="qicon" :class="{ dim: q.dim }" :style="{ width: q.w + 'px' }" viewBox="0 0 28 30" v-html="q.s"></svg>
        </template>
        <span class="win-label">窗口</span>
        <span class="qarrow small"></span>
        <span class="qarrow bar"></span>
        <div class="doc-title">冷月 - NX 2306 - 加工 - F:\零件\nx 刀路图档\ug1375个程序图档\ug程序图档\ug117.prt</div>
        <div class="siemens">SIEMENS</div>
        <svg class="win-btns" width="70" height="24" viewBox="0 0 70 24">
          <path d="M6 18h9" stroke="#fff" stroke-width="2" />
          <path d="M28 10h9v9h-9zM31 10V6h9v9h-3" fill="none" stroke="#fff" stroke-width="1.500" />
          <path d="M53 6l11 11M64 6L53 17" stroke="#fff" stroke-width="2" />
        </svg>
      </div>
      <nav class="tab-row">
        <span class="tab-file">文件(F)</span>
        <span v-for="(t, i) in menuTabs" :key="i" class="tab">{{ t }}</span>
        <span class="tab active">能新外挂 V5.12</span>
        <div class="search">
          <span>在此输入以搜索</span>
          <svg width="18" height="18" viewBox="0 0 18 18"><circle cx="11" cy="7" r="5.500" fill="none" stroke="#eee" stroke-width="1.300" /><path d="M7 11l-5 5" stroke="#eee" stroke-width="2.500" /></svg>
        </div>
        <svg class="head-ctl" width="120" height="26" viewBox="0 0 120 26">
          <path d="M1 6V1h7M17 1h7v5M24 21v4h-6M8 25H1v-4" fill="none" stroke="#fff" stroke-width="1.300" />
          <path d="M36 18L47 6l11 12" fill="none" stroke="#fff" stroke-width="1.300" />
          <circle cx="80" cy="13" r="11" fill="none" stroke="#fff" stroke-width="1.200" />
          <path d="M76 9c1-4 8-4 8 0 0 3-4 3-4 7M80 18v2" fill="none" stroke="#fff" stroke-width="1.200" />
          <path d="M113 1v19M113 23v2" stroke="#fff" stroke-width="1.400" />
        </svg>
      </nav>
    </header>

    <!-- ribbon -->
    <section class="ribbon">
      <div v-for="(g, gi) in groups" :key="gi" class="rgroup">
        <div class="rbox" :style="{ width: g.width + 'px', gridTemplateColumns: g.cols }">
          <div v-for="(ic, i) in g.icons" :key="i" class="rcell">
            <svg viewBox="0 0 28 30" width="26" height="28" v-html="ic"></svg>
          </div>
        </div>
        <svg class="rscroll" width="19" height="66" viewBox="0 0 19 66">
          <path d="M6 12l3-4 3 4z" fill="#777" />
          <path d="M6 30l3 4 3-4z" fill="#777" />
          <path d="M5 50h8v1.500H5zM5 53h8l-4 4z" fill="#eee" />
        </svg>
        <div class="rlabel">{{ g.label }}</div>
        <svg width="19" height="22" viewBox="0 0 19 22"><path d="M6 10h6l-3 4z" fill="#eee" /></svg>
      </div>
      <svg class="ribbon-end" width="10" height="8" viewBox="0 0 10 8"><path d="M1 1h7L4.500 6z" fill="#eee" /></svg>
    </section>

    <!-- selection bar -->
    <section class="bar2">
      <svg width="18" height="20" viewBox="0 0 18 20"><path d="M3 2h14M3 9h14M3 17h14" stroke="#eee" stroke-width="1.400" /></svg>
      <span class="menu-btn">菜单(M)</span>
      <svg width="8" height="6" viewBox="0 0 8 6"><path d="M1 1h6L4 5z" fill="#eee" /></svg>
      <i class="bsep first"></i>
      <div class="sel s1"><span>刀轨</span><b></b></div>
      <svg class="filter" width="28" height="26" viewBox="0 0 28 26"><path d="M3 3h14l-5 8v6M8 11l-3-8M13 20c3 3 7 2 7-2 0-2-2-4-4-4" fill="none" stroke="#777" /></svg>
      <div class="sel s2"><span>整个装配</span><b></b></div>
      <template v-for="(t, i) in tool2" :key="i">
        <i v-if="t.sep" class="bsep"></i>
        <div v-else class="bicon" :class="{ on: t.on, dim: t.dim }" :style="{ width: t.w + 'px' }">
          <svg viewBox="0 0 28 30" width="27" height="29" v-html="t.s"></svg>
        </div>
      </template>
      <svg class="ribbon-end" width="10" height="8" viewBox="0 0 10 8"><path d="M1 1h7L4.500 6z" fill="#eee" /></svg>
    </section>

    <main class="work">
      <!-- resource bar -->
      <aside class="ltabs">
        <div v-for="(t, i) in leftTabs" :key="i" class="ltab" :class="{ on: t.on }"
          :style="{ height: (t.h || 42) + 'px', marginTop: (t.gap || 0) + 'px' }">
          <svg width="26" height="26" viewBox="0 0 28 28" v-html="t.s"></svg>
        </div>
      </aside>

      <!-- operation navigator -->
      <aside class="nav">
        <div class="nav-title">
          <span>工序导航器</span>
          <svg width="13" height="12" viewBox="0 0 13 12"><path d="M.7 2.500h11.600v9H.7z" fill="none" stroke="#fff" /><path d="M0 1h13" stroke="#fff" stroke-width="2" /></svg>
        </div>
        <div class="nav-frame">
          <div class="nav-tools">
            <div v-for="(n, i) in navTools" :key="i" class="ntool" :class="{ on: n.on }">
              <svg width="30" height="30" viewBox="0 0 28 30" v-html="n.s"></svg>
            </div>
            <svg v-for="(n, i) in navDisabled" :key="'d' + i" class="ndis" width="32" height="32" viewBox="0 0 28 28" v-html="n"></svg>
          </div>
          <div class="nav-table">
            <div class="nav-head"><span class="c1">标题</span><span class="c2">通道</span></div>
            <div class="nav-body">
              <div class="nav-list">
                <div class="nrow">
                  <div class="c1 root">
                    <svg width="23" height="20" viewBox="0 0 23 20"><path d="M6.500 5.500h9v9h-9zM8.500 10h5" fill="none" stroke="#eee" /><path d="M15 10h7" stroke="#ddd" stroke-dasharray="1 1" /></svg>
                    <span>GENERIC_MACHINE</span>
                  </div>
                  <div class="c2"></div>
                </div>
                <div class="nrow">
                  <div class="c1">
                    <svg width="58" height="20" viewBox="0 0 58 20"><path d="M29 0v20M29 10h10" stroke="#ddd" stroke-dasharray="1 1" /><path d="M40 4h5l1 2h7v11H40z" fill="#cfe8f5" /><path d="M47 9h5M47 12h5M47 15h5" stroke="#2aa0e0" stroke-width="1.500" /></svg>
                    <span>未用项</span>
                  </div>
                  <div class="c2"></div>
                </div>
                <div v-for="n in navNames" :key="n" class="nrow">
                  <div class="c1">
                    <svg width="58" height="20" viewBox="0 0 58 20">
                      <path d="M29 0v20M29 10h10" stroke="#ddd" stroke-dasharray="1 1" />
                      <template v-if="navPlus.has(n)">
                        <rect x="25" y="5.500" width="9" height="9" fill="#333" stroke="#eee" />
                        <path d="M27 10h5M29.500 7.500v5" stroke="#eee" />
                      </template>
                      <rect x="43" y="2" width="7" height="16" rx="1" fill="#777" />
                      <path d="M43 7l7-4M43 12l7-5M43 16l7-5" stroke="#bbb" />
                    </svg>
                    <span>{{ n }}</span>
                  </div>
                  <div class="c2">n/a</div>
                </div>
              </div>
              <div class="vbar"><i></i></div>
            </div>
            <div class="hbar"><i></i></div>
          </div>
        </div>
      </aside>

      <section class="center">
        <div class="doc-tabs">
          <div class="dtab">
            <svg width="15" height="18" viewBox="0 0 15 18"><rect x="1" y="1" width="12" height="16" rx="5" fill="none" stroke="#ddd" /><path d="M4 13L9 3M5 7h5" stroke="#ddd" /></svg>
            <span>发现中心</span>
          </div>
          <div class="dtab cur">
            <svg width="15" height="18" viewBox="0 0 15 18"><path d="M1 1h5v3H2v3h4M1 10h4M9 9a3 3 0 1 0 3 3M12 9v4" fill="none" stroke="#fff" /></svg>
            <span>ug117.prt</span>
            <b>✕</b>
          </div>
        </div>

        <!-- graphics window -->
        <div class="canvas">
          <svg class="model" width="820" height="600" viewBox="0 0 820 600">
            <g transform="scale(.523 .3827)">
              <path d="M0,1470 L1490,1495 L1508,1470 L1505,1512 L1490,1532 L0,1512Z" fill="#7a7520" />
              <path d="M0,85 L318,90 Q327,90 327,100 L327,112 L420,113 Q425,113 426,100 Q427,92 435,92 L605,95 Q612,96 612,106 L612,118 L705,120 Q710,120 710,106 Q711,97 720,97 L1500,105 Q1510,108 1511,125 L1508,1470 L1490,1495 L0,1470 Z" fill="#ffff4a" />
              <path d="M318,1475 L314,1500 L428,1501 L420,1475 Z" fill="#ffff4a" stroke="#2a2a2a" />
              <path d="M607,1480 L601,1503 L716,1505 L710,1480 Z" fill="#ffff4a" stroke="#2a2a2a" />
              <path v-for="(p, i) in walls" :key="i" :d="p" fill="#7a7520" stroke="#333" />
              <path v-for="(p, i) in lines" :key="'l' + i" :d="p" fill="none" stroke="#2a2a2a" />
              <g v-for="(h, i) in bigHoles" :key="'b' + i">
                <ellipse :cx="h[0]" :cy="h[1]" rx="53" ry="68" fill="#7a7520" />
                <ellipse :cx="h[0]" :cy="h[1] + 21" rx="51" ry="47" fill="#25272c" />
              </g>
              <g v-for="(h, i) in bores" :key="'c' + i">
                <ellipse :cx="h[0]" :cy="h[1]" rx="44" ry="57" fill="#7a7520" stroke="#222" />
                <ellipse :cx="h[0]" :cy="h[1] + 9" rx="42" ry="47" fill="#ffff4a" />
                <ellipse :cx="h[0]" :cy="h[1]" rx="44" ry="57" fill="none" stroke="#222" />
                <ellipse :cx="h[0]" :cy="h[1] + 22" rx="25" ry="33" fill="#7a7520" />
                <ellipse :cx="h[0]" :cy="h[1] + 32" rx="23" ry="24" fill="#25272c" />
              </g>
              <g v-for="(h, i) in tinyHoles" :key="'t' + i">
                <ellipse :cx="h[0]" :cy="h[1]" rx="10" ry="13" fill="#7a7520" stroke="#333" />
                <ellipse :cx="h[0]" :cy="h[1] + 5" rx="7" ry="6" fill="#333" />
              </g>
              <ellipse cx="1424" cy="1380" rx="26" ry="34" fill="#7a7520" stroke="#333" />
              <ellipse cx="1424" cy="1390" rx="22" ry="23" fill="#ffff4a" />
              <ellipse cx="1424" cy="1400" rx="11" ry="13" fill="#7a7520" />
              <ellipse cx="1424" cy="1406" rx="10" ry="7" fill="#25272c" />
              <ellipse cx="1046" cy="793" rx="35" ry="35" fill="#7a7520" />
              <ellipse cx="1046" cy="813" rx="28" ry="15" fill="#25272c" />
              <path d="M1036,760 V800 M1056,760 V800" stroke="#333" />
              <path d="M517,785 V560" stroke="#1e9b3e" fill="none" stroke-width="2" />
              <path d="M517,535 L510,585 H525Z" fill="#2e9a46" />
              <path d="M518,785 V700" stroke="#0a2fd0" stroke-width="3" />
              <path d="M519,690 L512,715 H527Z" fill="#0a2fd0" />
              <path d="M517,787 H700" stroke="#e53030" stroke-width="2" />
              <path d="M560,778 L612,787 L560,796Z M650,780 L715,788 L650,796Z" fill="#d84040" />
              <ellipse cx="518" cy="760" rx="7" ry="9" fill="#a81818" />
            </g>
            <text x="247" y="204" class="ax green">YM</text>
            <text x="248" y="247" class="ax green">YC</text>
            <text x="257" y="254" class="ax red">Y</text>
            <text x="252" y="261" class="ax blue">ZM</text>
            <text x="253" y="279" class="ax blue">ZC</text>
            <text x="262" y="285" class="ax red">Z</text>
            <text x="310" y="317" class="ax red">XC</text>
            <text x="357" y="317" class="ax red">XM</text>
            <text x="239" y="579" class="d62">D62 ─►</text>
          </svg>

          <svg class="triad" width="130" height="130" viewBox="0 0 130 130">
            <path d="M1 54h43v54H11v-1H1z" fill="none" stroke="#bbb" />
            <path d="M23 80V22" stroke="#2e9a46" stroke-width="2.500" />
            <path d="M23 10l-5 22h10z" fill="#2e9a46" />
            <path d="M23 80V50" stroke="#1a3fd0" stroke-width="3" />
            <path d="M23 80H78" stroke="#d02020" stroke-width="2" />
            <path d="M66 76l26 4-26 4z" fill="#d02020" />
            <text x="20" y="6" class="ax green">Y</text>
            <text x="102" y="85" class="ax red">X</text>
          </svg>

          <svg class="bird" width="56" height="60" viewBox="0 0 56 60">
            <path d="M28 2l24 13v30L28 58 4 45V15z" fill="#4f8ef7" stroke="#8db8ff" stroke-width="1.500" />
            <path d="M28 2l24 13-24 15z" fill="#6ca0fa" />
            <path d="M8 18c6 0 11 2 15 8 6-6 10-9 20-12-2 6-4 10-8 14l10 4-12 1-1 14c-3-4-5-8-6-12-6 0-13-6-18-17z" fill="#eef3ff" />
          </svg>

          <div class="ime">
            <span class="ime-s">S</span>
            <span class="ime-zh">中</span>
            <svg width="118" height="20" viewBox="0 0 118 20">
              <circle cx="4" cy="6" r="2" fill="none" stroke="#0b6fd4" stroke-width="1.600" />
              <path d="M12 8c2 2 1 6-2 8" fill="none" stroke="#0b6fd4" stroke-width="2.500" />
              <rect x="26" y="1" width="8" height="12" rx="4" fill="#0b6fd4" /><path d="M23 10c0 8 14 8 14 0M30 16v3" fill="none" stroke="#0b6fd4" stroke-width="1.500" />
              <rect x="47" y="3" width="15" height="12" rx="2" fill="#0b6fd4" /><path d="M49 7h11M49 10h11M51 13h7" stroke="#fff" stroke-dasharray="1.500 1" />
              <path d="M71 4l4-2h7l4 2 2 4-3 1v9H74V9l-3-1z" fill="#0b6fd4" />
              <rect x="94" y="2" width="7" height="7" rx="2" fill="#2a6fe0" /><rect x="103" y="2" width="7" height="7" rx="2" fill="#2a6fe0" /><rect x="94" y="11" width="7" height="7" rx="2" fill="#2a6fe0" /><rect x="103" y="11" width="7" height="7" rx="2" fill="#4a7fd0" />
            </svg>
          </div>

          <!-- the combo shortcut dialog -->
          <div class="dialog">
            <div class="dlg-title">
              <span class="t1">NX_组合快捷键</span>
              <span class="t2">使用状态【已开启】</span>
              <svg width="12" height="12" viewBox="0 0 12 12"><path d="M1 1l10 10M11 1L1 11" stroke="#222" stroke-width="1.200" /></svg>
            </div>
            <div class="dlg-body">
              <div class="list">
                <div class="list-head">
                  <span>序</span><span>快捷键</span><span>按钮ID</span><span>命令备注</span><span>模块应用</span>
                </div>
                <div class="list-main">
                  <div class="rows">
                    <div v-for="r in comboRows" :key="r[0]" class="row" :class="{ picked: r[0] === '21' }">
                      <span v-for="(c, i) in r" :key="i">{{ c }}</span>
                    </div>
                    <div class="row stub"><span></span><span></span><span></span><span></span><span></span></div>
                  </div>
                  <div class="list-vbar"><i></i></div>
                </div>
                <div class="list-hbar">
                  <button class="sb"><svg width="6" height="10" viewBox="0 0 6 10"><path d="M6 0v10L0 5z" fill="#111" /></svg></button>
                  <div class="sb-thumb"></div>
                  <div class="sb-rest"></div>
                  <button class="sb"><svg width="6" height="10" viewBox="0 0 6 10"><path d="M0 0v10l6-5z" fill="#111" /></svg></button>
                </div>
              </div>
              <div class="dlg-foot">
                <fieldset class="fs fs1">
                  <legend>UG快捷键开关</legend>
                  <label class="radio"><i class="dot on"></i>开启UG软件快捷键</label>
                  <label class="radio"><i class="dot"></i>关闭UG软件快捷键</label>
                </fieldset>
                <fieldset class="fs fs2">
                  <legend>模式选择</legend>
                  <label class="radio"><i class="dot on"></i>仅字符输入模式</label>
                  <label class="radio"><i class="dot"></i>空格键开关模式</label>
                  <label class="radio"><i class="dot"></i>空格键执行模式</label>
                </fieldset>
                <div class="btns">
                  <button>导入组合键</button>
                  <button>功能使用说明</button>
                  <button>备份组合键</button>
                  <button>关闭组合键</button>
                </div>
              </div>
            </div>
          </div>
        </div>
      </section>

      <aside class="rtools">
        <svg v-for="(r, i) in rightTools" :key="i" width="26" height="28" viewBox="0 0 28 28" v-html="r"></svg>
        <i class="rsep"></i>
        <svg class="rback" width="6" height="10" viewBox="0 0 6 10"><path d="M6 0v10L0 5z" fill="#eee" /></svg>
      </aside>
    </main>

    <div class="status"></div>

    <!-- windows taskbar -->
    <footer class="taskbar">
      <div class="weather">
        <svg width="26" height="34" viewBox="0 0 26 34">
          <path d="M15 6c8 3 11 14 4 21-4 4-11 3-15-1 8 1 14-9 11-20z" fill="#f39a1f" />
          <ellipse cx="9" cy="9" rx="7" ry="5" fill="#a9c6ee" stroke="#6a8ed0" />
          <ellipse cx="17" cy="24" rx="7" ry="5" fill="#a9c6ee" stroke="#6a8ed0" />
        </svg>
        <div class="wtext"><div>29°C</div><div class="w2">局部多云</div></div>
      </div>
      <div class="tb-center">
        <svg width="24" height="24" viewBox="0 0 24 24">
          <path d="M0 0h11.500v11.500H0z" fill="#3ac0f5" /><path d="M12.500 0H24v11.500H12.500z" fill="#27a5ee" />
          <path d="M0 12.500h11.500V24H0z" fill="#1b94e6" /><path d="M12.500 12.500H24V24H12.500z" fill="#1084db" />
        </svg>
        <div class="tb-search">
          <svg width="16" height="17" viewBox="0 0 16 17"><circle cx="9" cy="7" r="5.500" fill="none" stroke="#222" stroke-width="1.500" /><path d="M5 11.500L1 16" stroke="#222" stroke-width="2" /></svg>
          <span>搜索</span>
          <svg class="whale" width="56" height="30" viewBox="0 0 56 30">
            <path d="M0 30c6-10 22-13 50-6l6 6z" fill="#33b4d8" />
            <path d="M6 18C10 6 20 2 32 3l-4 3c3 3 2 4-2 4-6 1-10 4-14 9z" fill="#7c8fc4" />
            <path d="M24 22c8-5 18-5 24-3 2-4 1-7 0-9 2 1 4 1 6-1 0 4-2 7-4 9-2 8-16 12-26 4z" fill="#4a5a8a" />
          </svg>
        </div>
        <svg class="tb-app" width="26" height="26" viewBox="0 0 26 26">
          <rect x="13" y="1" width="13" height="16" fill="#f4f4f4" /><rect x="1" y="8" width="18" height="17" fill="#222" /><rect x="7" y="8" width="12" height="10" fill="#c8c8c8" />
        </svg>
        <div class="tb-item">
          <svg width="24" height="24" viewBox="0 0 24 24"><path d="M0 2h9l2 2h13v19H0z" fill="#e6a81f" /><path d="M0 6h24v17H0z" fill="#ffd44f" /><path d="M8 16h9v7H8z" fill="#1572c7" /></svg>
        </div>
        <div class="tb-item">
          <svg width="24" height="24" viewBox="0 0 24 24"><circle cx="12" cy="12" r="12" fill="#1478c8" /><path d="M4 4c6-6 18-3 19 8-2 4-8 3-8 0 0-4-7-4-9 0C6 7 5 6 4 4z" fill="#3fd38a" /><path d="M8 12c-2 6 4 10 8 8 2 1 5-1 7-3-3 3-15 3-15-5z" fill="#e6f5ff" /></svg>
        </div>
        <div class="tb-item">
          <svg width="24" height="24" viewBox="0 0 24 24"><circle cx="14" cy="10" r="7.500" fill="none" stroke="#f07a12" stroke-width="3.200" /><path d="M8 16L2 22" stroke="#f07a12" stroke-width="4" stroke-linecap="round" /></svg>
        </div>
        <div class="tb-item">
          <div class="tb-nx">NX</div>
        </div>
      </div>
      <div class="tray">
        <svg width="14" height="9" viewBox="0 0 14 9"><path d="M1 8l6-6 6 6" fill="none" stroke="#222" stroke-width="1.400" /></svg>
        <svg class="qq" width="18" height="18" viewBox="0 0 18 18"><ellipse cx="8" cy="9" rx="6.500" ry="8.500" fill="#111" /><ellipse cx="8" cy="12" rx="4.500" ry="5" fill="#fff" /><path d="M2 11h12v2H2z" fill="#e0332a" /><path d="M10 9h8v7h-8z" fill="#f3b81f" /></svg>
        <span class="tray-zh">中</span>
        <span class="tray-s">S</span>
        <svg class="tray-net" width="18" height="18" viewBox="0 0 18 18"><path d="M1 3h12v10H1zM4 16h6M7 13v3" fill="none" stroke="#222" /><rect x="11" y="1" width="4" height="8" rx="1" fill="#eee" stroke="#222" /></svg>
        <svg width="18" height="18" viewBox="0 0 18 18"><path d="M2 7h3l4-4v12l-4-4H2z" fill="none" stroke="#222" /><path d="M11 6c2 2 2 4 0 6M13 4c3 3 3 7 0 10M15 2c4 4 4 10 0 14" fill="none" stroke="#222" /></svg>
        <div class="clock"><div>22:01</div><div>2022/7/23</div></div>
        <span class="badge">4</span>
      </div>
      <div class="watermark">UG爱好者论坛@寒月伴花痴</div>
    </footer>

    <!-- annotation arrows on top of everything -->
    <svg class="arrows" width="2560" height="1440" viewBox="0 0 2560 1440">
      <polygon points="1072,380 646,462 642,457 626,467 645,474 644,470 1072,385" fill="#f64040" />
      <polygon points="1335,90 1356,92 1347,97 1436,205 1340,101 1332,104" fill="#f64040" />
      <polygon points="1571,60 1582,78 1576,76 1586,193 1569,78 1563,81" fill="#f64040" />
    </svg>
  </div>
</template>

<style>
html, body { margin: 0; background: #333; }
</style>

<style scoped>
.app { position: relative; width: 2560px; height: 1440px; overflow: hidden; display: flex; flex-direction: column; background: #333; color: #eee; font-family: "Open Sans", "Noto Sans CJK SC", sans-serif; font-size: 12px; }
.head { height: 56px; flex: none; background: #04749f; color: #e9f3f7; }
.title-row { height: 26px; display: flex; align-items: center; }
.nx { width: 46px; padding-left: 3px; box-sizing: border-box; font: 700 26px "Liberation Sans", sans-serif; color: #fff; letter-spacing: -1px; }
.qsep { width: 1px; height: 22px; background: #0a5170; }
.qicon { height: 24px; flex: none; }
.qicon.dim, .qarrow.dim { opacity: .35; }
.qarrow { flex: none; height: 24px; display: flex; align-items: center; justify-content: center; }
.qarrow::before { content: ""; border: 3px solid transparent; border-top: 4px solid #fff; margin-top: 3px; }
.qarrow.small { width: 16px; }
.qarrow.bar { width: 10px; }
.win-label { font-size: 12px; color: #fff; width: 26px; white-space: nowrap; }
.doc-title { margin-left: 750px; font-size: 12.600px; color: #eaf3f7; white-space: nowrap; }
.siemens { margin-left: auto; font: 700 13px "Liberation Sans", sans-serif; letter-spacing: .5px; color: #fff; margin-right: 19px; }
.win-btns { margin-right: 2px; }
.tab-row { height: 30px; box-sizing: border-box; padding-bottom: 2px; display: flex; align-items: center; gap: 32.500px; padding-left: 19px; position: relative; font-size: 13px; }
.tab-file { margin-right: 8.500px; }
.tab { white-space: nowrap; }
.tab.active { color: #f6c343; position: relative; margin-left: 2px; }
.tab.active::after { content: ""; position: absolute; left: -17px; right: -16px; bottom: -4px; height: 2px; background: #f6c343; }
.search { position: absolute; left: 2240px; top: 4px; width: 178px; height: 22px; box-sizing: border-box; background: #333; border: 1px solid #ddd; display: flex; align-items: center; justify-content: space-between; color: #8a8a8a; font-size: 12px; padding-right: 2px; }
.head-ctl { position: absolute; left: 2428px; top: 3px; }
.ribbon { height: 88px; flex: none; background: #333; border-bottom: 1px solid #1a1a1a; display: flex; padding: 5px 0 0 5px; box-sizing: content-box; position: relative; }
.rgroup { display: grid; grid-template-columns: auto 19px; grid-template-rows: 66px 22px; border-right: 1px solid #1c1c1c; margin-right: 5px; height: 84px; }
.rbox { display: grid; grid-template-rows: 33px 33px; border: 1px solid #1a1a1a; box-sizing: border-box; height: 66px; }
.rcell { display: flex; align-items: center; justify-content: center; min-width: 0; }
.rcell svg { overflow: visible; flex: none; }
.rlabel { color: #3a9cba; font-size: 12px; text-align: center; line-height: 24px; white-space: nowrap; overflow: hidden; }
.rscroll { display: block; }
.ribbon-end { position: absolute; right: 6px; bottom: 8px; }
.bar2 { height: 33px; flex: none; border-bottom: 1px solid #222; background: #333; display: flex; align-items: center; padding-left: 12px; position: relative; }
.menu-btn { margin: 0 4px 0 8px; color: #eee; }
.bsep { width: 1px; height: 26px; background: #1e1e1e; margin: 0 5px; flex: none; }
.bsep.first { margin: 0 12px 0 3px; }
.bsep + .bicon { margin-left: 3px; }
.sel { height: 21px; box-sizing: border-box; border: 1px solid #ccc; display: flex; align-items: center; justify-content: space-between; padding: 0 6px 0 3px; color: #eee; flex: none; }
.sel b { border: 4px solid transparent; border-top: 5px solid #eee; margin-top: 5px; }
.s1 { width: 150px; }
.s2 { width: 156px; margin-right: 6px; }
.filter { width: 41px; flex: none; }
.bicon { height: 30px; flex: none; display: flex; align-items: center; justify-content: flex-start; }
.bicon svg { overflow: visible; flex: none; margin-left: 2px; }
.bicon.on { background: #0a5a82; }
.bicon.dim { opacity: .6; }
.work { flex: 1; min-height: 0; display: flex; }
.ltabs { width: 32px; flex: none; background: #484848; box-sizing: border-box; border-right: 1px solid #222; }
.ltab { display: flex; align-items: center; justify-content: center; box-sizing: border-box; }
.ltab.on { background: #2e2e2e; margin-left: 2px; margin-right: -1px; border: 1px solid #1a1a1a; border-right: none; }
.nav { width: 324px; flex: none; background: #333; border-right: 1px solid #1c1c1c; box-sizing: border-box; padding: 0 9px 6px 7px; display: flex; flex-direction: column; }
.nav-title { height: 28px; display: flex; align-items: center; justify-content: space-between; font-size: 13px; padding: 0 6px 0 3px; color: #eee; flex: none; }
.nav-frame { flex: 1; min-height: 0; background: #4a4a4a; border: 1px solid #1f1f1f; padding: 0 5px 4px 3px; display: flex; flex-direction: column; }
.nav-tools { height: 39px; flex: none; display: flex; align-items: center; margin-left: -2px; }
.ntool { width: 34px; height: 32px; display: flex; align-items: center; justify-content: center; }
.ntool.on { background: #0a5a82; }
.ndis { margin-left: 4px; }
.nav-table { flex: 1; min-height: 0; background: #f0f0f0; border: 1px solid #1f1f1f; display: flex; flex-direction: column; }
.nav-head { height: 20px; flex: none; display: flex; background: #555; color: #ddd; font-size: 12px; line-height: 20px; }
.nav-head .c1 { width: 200px; padding-left: 6px; box-sizing: border-box; border-right: 1px solid #222; }
.nav-head .c2 { padding-left: 6px; }
.nav-body { flex: 1; min-height: 0; display: flex; }
.nav-list { width: 279px; overflow: hidden; background: #333; }
.nrow { height: 20px; display: flex; box-sizing: border-box; border-bottom: 1px solid #252525; color: #d3e4f2; font-size: 12px; }
.nrow:nth-child(even) { background: #2e2e2e; }
.nrow .c1 { width: 200px; display: flex; align-items: center; box-sizing: border-box; border-right: 1px solid #111; white-space: nowrap; }
.nrow .c2 { padding-left: 5px; line-height: 20px; color: #e8e8e8; }
.vbar { flex: 1; position: relative; }
.vbar i { display: block; width: 2px; height: 693px; margin: 18px 0 0 8px; background: #999; }
.hbar { height: 17px; flex: none; }
.hbar i { display: block; width: 17px; height: 2px; background: #999; margin: 8px 0 0 17px; }
.center { flex: 1; min-width: 0; display: flex; flex-direction: column; }
.doc-tabs { height: 27px; flex: none; background: #333; border-bottom: 2px solid #2f92b8; box-sizing: border-box; display: flex; padding-left: 8px; }
.dtab { display: flex; align-items: center; gap: 4px; font-size: 12.500px; color: #eee; padding: 0 5px; width: 88px; box-sizing: border-box; white-space: nowrap; }
.dtab.cur { background: #2f92b8; color: #fff; width: 104px; padding: 0 6px; }
.dtab.cur b { font-size: 11px; margin-left: 2px; }
.canvas { flex: 1; position: relative; background: #25272c; overflow: hidden; }
.model { position: absolute; left: 704px; top: 289px; }
.model path, .model ellipse { vector-effect: non-scaling-stroke; }
.ax { font: 12px "Liberation Sans", sans-serif; }
.green { fill: #2e9a46; }
.red { fill: #e03a3a; }
.blue { fill: #1a50e0; }
.d62 { font: 700 10px "DejaVu Sans Mono", monospace; fill: #3a3a3a; }
.triad { position: absolute; left: 84px; top: 967px; overflow: visible; }
.bird { position: absolute; left: 2049px; top: 970px; }
.ime { position: absolute; left: 1967px; top: 1104px; width: 178px; height: 26px; display: flex; align-items: center; background: linear-gradient(90deg, transparent 22px, #fff 22px); border-radius: 2px; }
.ime-s { width: 30px; height: 28px; background: #f0561d; transform: rotate(-12deg); color: #fff; font: 900 24px/28px "Liberation Sans", sans-serif; text-align: center; border-radius: 2px; flex: none; }
.ime-zh { color: #0b6fd4; font-size: 15px; font-weight: 700; margin: 0 7px 0 8px; }
.dialog { position: absolute; left: 208px; top: 78px; width: 500px; height: 791px; background: #f0f0f0; border-radius: 8px; box-shadow: 0 2px 14px rgba(0, 0, 0, .45); overflow: hidden; color: #111; font-family: "Open Sans", "Noto Sans CJK SC", sans-serif; }
.dlg-title { height: 30px; background: #fff; display: flex; align-items: center; padding-left: 8px; font-size: 12.500px; position: relative; }
.dlg-title .t1 { width: 123px; }
.dlg-title svg { position: absolute; right: 9px; top: 8px; }
.dlg-body { padding: 11px 11px 0 12px; }
.list { width: 477px; height: 633px; box-sizing: border-box; background: #fff; border: 1px solid #bbb; border-top: 2px solid #888; display: flex; flex-direction: column; }
.list-head { height: 17px; flex: none; display: grid; grid-template-columns: 25px 80px 200px 100px 53px; background: #f0f0f0; color: #111; font-size: 12px; line-height: 16px; margin-right: 17px; }
.list-head span { padding-left: 5px; box-sizing: border-box; border: 1px solid; border-color: #fff #777 #999 #fff; overflow: hidden; white-space: nowrap; }
.list-main { flex: 1; min-height: 0; display: flex; }
.rows { width: 455px; margin-left: 3px; overflow: hidden; padding-top: 2px; }
.row { height: 21px; display: grid; grid-template-columns: 23px 80px 200px 100px 52px; color: #0000ff; font-size: 10.800px; line-height: 21px; }
.row:nth-child(even) { background: #f0f0f0; }
.row span { padding-left: 2px; box-sizing: border-box; border-right: 1px solid #fff; white-space: nowrap; overflow: hidden; }
.row span:nth-child(n+2) { padding-left: 4px; }
.row span:nth-child(n+4) { padding-left: 5px; font-size: 12px; }
.row.picked { background: #0078d7; color: #fff; }
.row.stub { height: 7px; background: #fff; }
.list-vbar { flex: 1; }
.list-vbar i { display: block; width: 2px; height: 463px; background: #999; margin: 116px 0 0 8px; }
.list-hbar { height: 17px; flex: none; display: flex; margin-right: 17px; border-top: 1px solid #aaa; border-bottom: 1px solid #aaa; box-sizing: border-box; background: #f0f0f0; }
.sb { width: 17px; padding: 0; border: 1px solid #aaa; background: #f0f0f0; display: flex; align-items: center; justify-content: center; }
.sb-thumb { flex: 1; border-right: 1px solid #aaa; }
.sb-rest { width: 15px; background: repeating-conic-gradient(#fff 0 25%, #e2e2e2 0 50%) 0 0 / 2px 2px; }
.dlg-foot { display: flex; padding: 13px 0 0 2px; align-items: flex-start; }
.fs { margin: 0; border: 1px solid #aaa; box-sizing: border-box; height: 85px; position: relative; font-size: 12px; }
.fs legend { padding: 0 2px; font-size: 13px; line-height: 14px; }
.fs1 { width: 142px; padding: 3px 0 0 9px; }
.fs1 legend { margin-left: -4px; }
.fs2 { width: 118px; margin-left: 14px; padding: 0 0 0 7px; }
.fs2 legend { margin-left: -1px; }
.radio { display: flex; align-items: center; gap: 5px; height: 21px; font-size: 11.700px; white-space: nowrap; }
.dot { width: 11px; height: 11px; border-radius: 50%; border: 1px solid #777; background: #fff; box-sizing: border-box; position: relative; }
.dot.on::after { content: ""; position: absolute; left: 2.500px; top: 2.500px; width: 4px; height: 4px; border-radius: 50%; background: #111; }
.btns { width: 184px; height: 79px; box-sizing: border-box; margin: 6px 0 0 14px; border: 1px solid #aaa; padding: 5px 3px 0 3px; display: grid; grid-template-columns: 84px 84px; grid-template-rows: 30px 30px; column-gap: 8px; row-gap: 5px; }
.btns button { padding: 0; font: 13px "Open Sans", "Noto Sans CJK SC", sans-serif; color: #111; background: #f0f0f0; border: 1px solid; border-color: #fff #777 #777 #fff; box-shadow: inset -1px -1px 0 #aaa; }
.rtools { width: 35px; flex: none; background: #333; border-left: 1px solid #1c1c1c; box-sizing: border-box; display: flex; flex-direction: column; align-items: center; padding-top: 14px; gap: 3px; position: relative; }
.rsep { width: 28px; height: 1px; background: #111; margin-top: 6px; }
.rback { position: absolute; left: 6px; bottom: 3px; }
.status { height: 22px; flex: none; background: #333; border-top: 1px solid #1a1a1a; box-sizing: border-box; }
.taskbar { height: 48px; flex: none; position: relative; display: flex; align-items: center; color: #222; background: linear-gradient(90deg, #e3eef7 0, #e6eff8 25%, #d4e1f7 42%, #d6dff6 60%, #dde7f4 78%, #e2edf5 100%); }
.weather { width: 1047px; flex: none; display: flex; align-items: center; gap: 6px; padding-left: 20px; box-sizing: border-box; font-size: 11.500px; line-height: 15px; }
.w2 { color: #555; }
.tb-center { display: flex; align-items: center; }
.tb-search { width: 218px; height: 30px; margin-left: 14px; background: #f2f6fd; border: 1px solid #c8d2e6; box-sizing: border-box; border-radius: 15px; display: flex; align-items: center; padding-left: 11px; gap: 11px; font-size: 12.500px; color: #444; position: relative; overflow: hidden; }
.whale { position: absolute; right: 3px; bottom: 0; }
.tb-app { margin: 0 0 0 13px; }
.tb-item { width: 44px; display: flex; justify-content: center; position: relative; }
.tb-item::after { content: ""; position: absolute; left: 19px; top: 30px; width: 6px; height: 3px; border-radius: 2px; background: #666; }
.tb-app + .tb-item { margin-left: 6px; }
.tb-nx { width: 24px; height: 24px; background: #8c1212; color: #fff; font: 700 11px/24px "Liberation Sans", sans-serif; text-align: center; box-shadow: -2px 2px 0 #0b8a8a; }
.tray { margin-left: auto; display: flex; align-items: center; padding-right: 18px; height: 48px; }
.qq { margin-left: 9px; }
.tray-zh { margin-left: 13px; font-size: 13px; width: 20px; }
.tray-s { margin-left: 18px; width: 14px; height: 14px; background: #f0561d; color: #fff; font: 900 12px/14px "Liberation Sans", sans-serif; text-align: center; transform: rotate(-10deg); }
.tray-net { margin-left: 23px; }
.tray-net + svg { margin-left: 6px; }
.clock { width: 60px; margin-left: 11px; text-align: right; font-size: 12px; line-height: 19px; white-space: nowrap; }
.badge { margin-left: 6px; width: 16px; height: 16px; background: #0f78d4; border-radius: 50%; color: #fff; font-size: 10px; line-height: 16px; text-align: center; font-weight: 700; }
.watermark { position: absolute; right: 3px; bottom: 0; color: #555; font-size: 14px; letter-spacing: 1.200px; line-height: 18px; text-shadow: 0 0 2px #fff; white-space: nowrap; }
.arrows { position: absolute; left: 0; top: 0; pointer-events: none; }
</style>
